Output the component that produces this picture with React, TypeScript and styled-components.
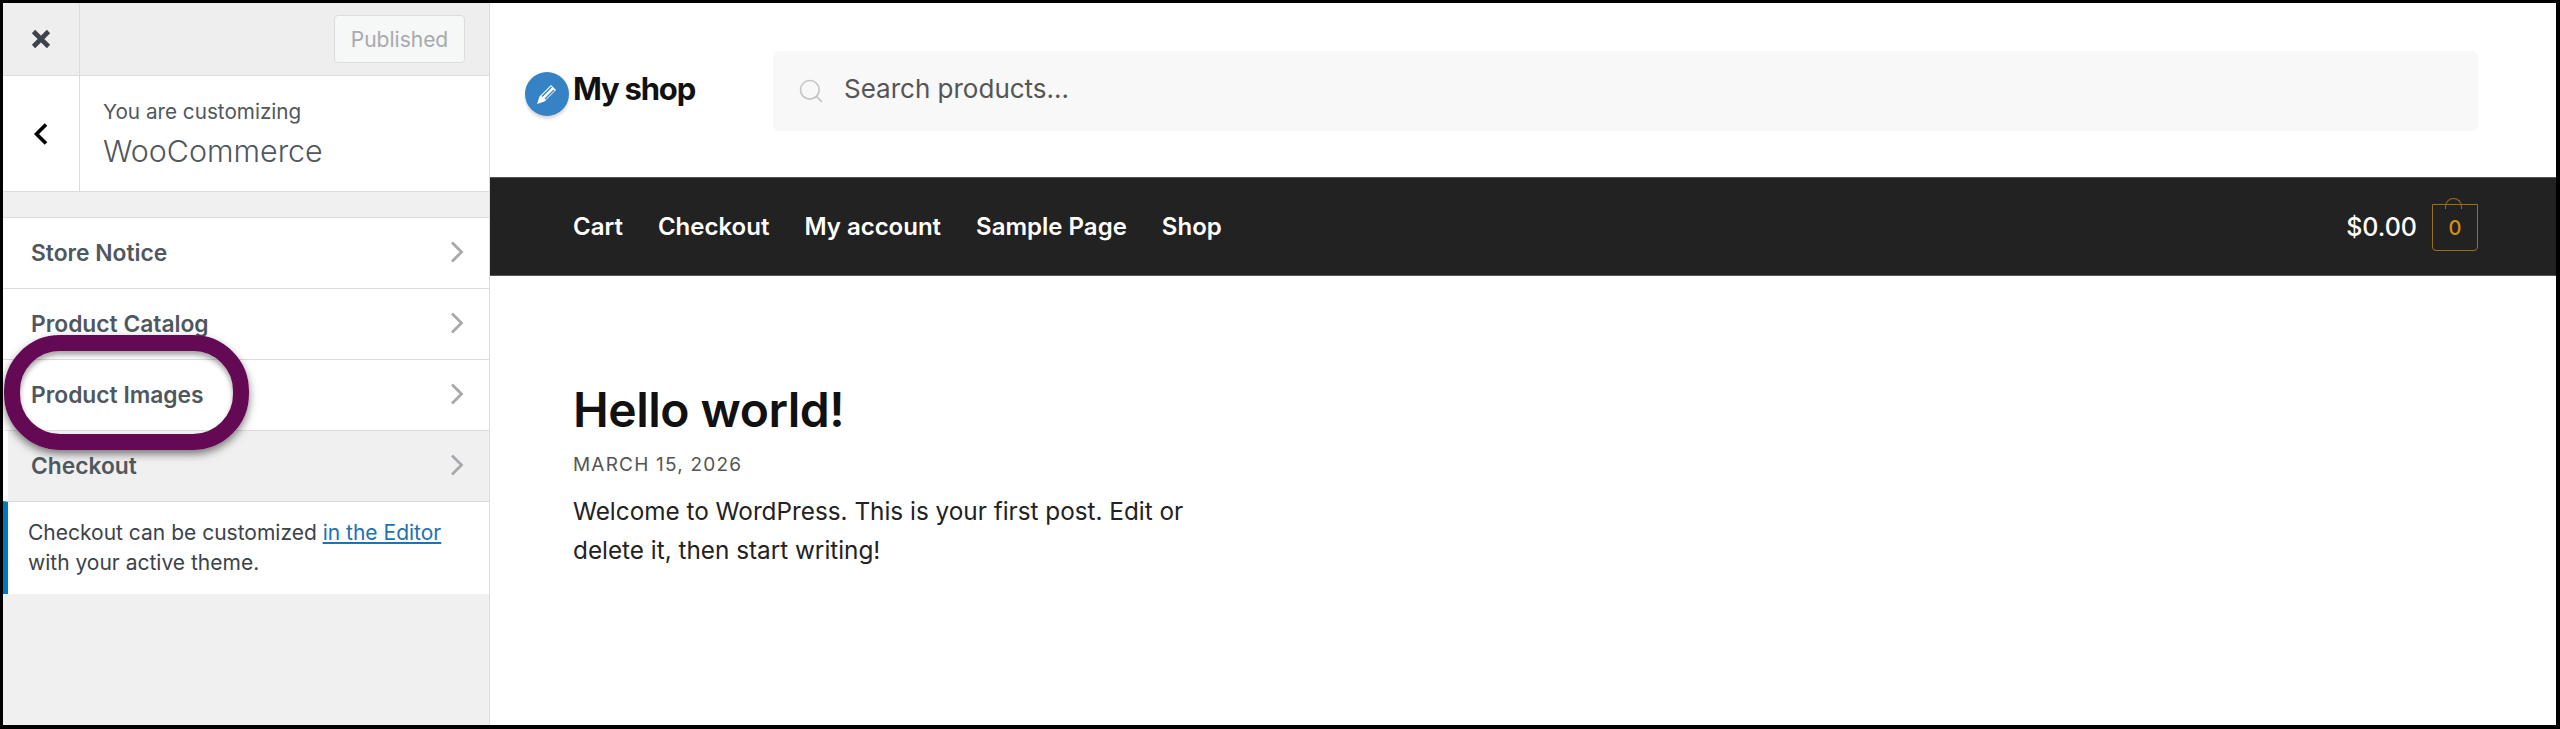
import React from 'react';
import styled, { createGlobalStyle } from 'styled-components';
import { Search } from 'lucide-react';

const GlobalStyle = createGlobalStyle`
    html, body {
        margin: 0;
        padding: 0;
        background: #000;
    }
`;

const menuItems = [
    { label: 'Store Notice' },
    { label: 'Product Catalog' },
    { label: 'Product Images' },
    { label: 'Checkout', active: true }
];

const navLinks = ['Cart', 'Checkout', 'My account', 'Sample Page', 'Shop'];

export default function App() {
    return (
        <Frame>
            <GlobalStyle />
            <Sidebar>
                <TopBar>
                    <CloseCell>
                        <svg width="20" height="20" viewBox="0 0 20 20">
                            <path d="M2.5 2.5L17.5 17.5M17.5 2.5L2.5 17.5" stroke="#3c434a" strokeWidth="4.6" />
                        </svg>
                    </CloseCell>
                    <PublishedButton>Published</PublishedButton>
                </TopBar>
                <SectionHeader>
                    <BackCell>
                        <svg width="16" height="24" viewBox="0 0 16 24">
                            <path d="M13 2.5L3.5 12L13 21.5" fill="none" stroke="#000" strokeWidth="3.6" />
                        </svg>
                    </BackCell>
                    <SectionTitle>
                        <Eyebrow>You are customizing</Eyebrow>
                        <PanelName>WooCommerce</PanelName>
                    </SectionTitle>
                </SectionHeader>
                <Spacer />
                {menuItems.map((item) => (
                    <MenuRow key={item.label} $active={item.active}>
                        {item.label}
                        <svg width="14" height="22" viewBox="0 0 14 22">
                            <path d="M2 1.5L11.5 11L2 20.5" fill="none" stroke="#a7aaad" strokeWidth="2.8" />
                        </svg>
                    </MenuRow>
                ))}
                <Notice>
                    Checkout can be customized <NoticeLink>in the Editor</NoticeLink> with your active theme.
                </Notice>
                <Ring />
            </Sidebar>
            <Main>
                <Masthead>
                    <Logo>
                        <LogoBadge>
                            <svg width="26" height="26" viewBox="0 0 26 26">
                                <path d="M3 23L5.5 15.5L17 4L22 9L10.5 20.5Z" fill="#fff" />
                                <path d="M8 15.5L17.5 6M11 18L20 9" stroke="#3582c4" strokeWidth="1.4" />
                            </svg>
                        </LogoBadge>
                        <LogoText>My shop</LogoText>
                    </Logo>
                    <SearchBox>
                        <Search size={28} color="#c4c4c4" strokeWidth={1.4} />
                        <SearchText>Search products...</SearchText>
                    </SearchBox>
                </Masthead>
                <NavBar>
                    <NavLinks>
                        {navLinks.map((link) => (
                            <NavLink key={link}>{link}</NavLink>
                        ))}
                    </NavLinks>
                    <Cart>
                        $0.00
                        <CartBag>
                            <CartHandle />0
                        </CartBag>
                    </Cart>
                </NavBar>
                <Post>
                    <PostTitle>Hello world!</PostTitle>
                    <PostDate>March 15, 2026</PostDate>
                    <PostBody>Welcome to WordPress. This is your first post. Edit or delete it, then start writing!</PostBody>
                </Post>
            </Main>
        </Frame>
    );
}

const Frame = styled.div`
    box-sizing: border-box;
    display: flex;
    width: 2560px;
    height: 729px;
    overflow: hidden;
    padding: 3px 4px 4px 3px;
    background: #000;
    font-family: Inter, 'Liberation Sans', sans-serif;
`;

const Sidebar = styled.aside`
    position: relative;
    box-sizing: border-box;
    display: flex;
    flex-direction: column;
    flex: 0 0 487px;
    background: #f0f0f1;
    border-right: 1px solid #dcdcde;
`;

const TopBar = styled.div`
    display: flex;
    align-items: center;
    justify-content: space-between;
    height: 72px;
    flex-shrink: 0;
    padding-right: 24px;
    background: #eeeeee;
    border-bottom: 1px solid #dcdcde;
`;

const CloseCell = styled.div`
    display: flex;
    align-items: center;
    justify-content: center;
    width: 76px;
    height: 100%;
    border-right: 1px solid #dcdcde;
`;

const PublishedButton = styled.div`
    box-sizing: border-box;
    display: flex;
    align-items: center;
    justify-content: center;
    width: 131px;
    height: 48px;
    border: 1px solid #dcdcde;
    border-radius: 4px;
    background: #f6f7f7;
    color: #a7aaad;
    font-size: 21px;
`;

const SectionHeader = styled.div`
    display: flex;
    height: 115px;
    flex-shrink: 0;
    background: #fff;
    border-bottom: 1px solid #dcdcde;
`;

const BackCell = styled.div`
    display: flex;
    align-items: center;
    justify-content: center;
    width: 76px;
    border-right: 1px solid #dcdcde;
`;

const SectionTitle = styled.div`
    display: flex;
    flex-direction: column;
    justify-content: center;
    padding-left: 23px;
    color: #50575e;
`;

const Eyebrow = styled.div`
    font-size: 20.7px;
    line-height: 30px;
`;

const PanelName = styled.div`
    margin-top: 4px;
    font-size: 30.4px;
    line-height: 40px;
    font-weight: 300;
`;

const Spacer = styled.div`
    height: 25px;
    flex-shrink: 0;
`;

const MenuRow = styled.div<{ $active?: boolean }>`
    box-sizing: border-box;
    display: flex;
    align-items: center;
    justify-content: space-between;
    height: 71px;
    flex-shrink: 0;
    padding: 0 25px 2px ${(p) => (p.$active ? '23px' : '28px')};
    background: ${(p) => (p.$active ? '#f0f0f1' : '#fff')};
    border-top: 1px solid #dcdcde;
    border-left: ${(p) => (p.$active ? '5px solid #fff' : 'none')};
    color: #50575e;
    font-size: 22.8px;
    font-weight: 600;
`;

const Notice = styled.div`
    padding: 16px 20px 16px 20px;
    background: #fff;
    border-left: 5px solid #0079bf;
    border-top: 1px solid #dcdcde;
    color: #3c434a;
    font-size: 21px;
    line-height: 30px;
`;

const NoticeLink = styled.span`
    color: #2271b1;
    text-decoration: underline;
`;

// purple annotation drawn over the sidebar
const Ring = styled.div`
    position: absolute;
    left: 1px;
    top: 332px;
    box-sizing: border-box;
    width: 245px;
    height: 115px;
    border: 16px solid #640a55;
    border-radius: 56px;
    box-shadow: 0 4px 8px rgba(0, 0, 0, 0.5), inset 0 4px 5px rgba(0, 0, 0, 0.35);
`;

const Main = styled.main`
    display: flex;
    flex-direction: column;
    flex: 1;
    background: #fff;
`;

const Masthead = styled.header`
    display: flex;
    align-items: center;
    height: 174px;
    flex-shrink: 0;
    padding: 1px 78px 0 35px;
    box-sizing: border-box;
`;

const Logo = styled.div`
    display: flex;
    align-items: center;
    width: 248px;
`;

const LogoText = styled.span`
    margin-top: -4px;
    color: #111;
    font-size: 31px;
    font-weight: 700;
    letter-spacing: -1.2px;
`;

const LogoBadge = styled.div`
    display: flex;
    align-items: center;
    justify-content: center;
    width: 44px;
    height: 44px;
    margin: 6px 4px 0 0;
    border-radius: 50%;
    background: #3582c4;
    box-shadow: 0 3px 3px rgba(0, 0, 0, 0.15);
`;

const SearchBox = styled.div`
    box-sizing: border-box;
    display: flex;
    align-items: center;
    gap: 19px;
    flex: 1;
    height: 80px;
    padding-left: 24px;
    background: #f8f8f8;
    border-radius: 6px;
`;

const SearchText = styled.span`
    margin-top: -4px;
    color: #555;
    font-size: 26px;
`;

const NavBar = styled.nav`
    display: flex;
    align-items: center;
    justify-content: space-between;
    height: 99px;
    flex-shrink: 0;
    padding: 0 78px 0 83px;
    background: #222;
    border-top: 1px solid #555;
    border-bottom: 1px solid #555;
    box-sizing: border-box;
`;

const NavLinks = styled.div`
    display: flex;
    gap: 35px;
`;

const NavLink = styled.span`
    color: #fff;
    font-size: 24px;
    font-weight: 600;
`;

const Cart = styled.div`
    display: flex;
    align-items: center;
    gap: 15px;
    color: #fff;
    font-size: 25px;
    font-weight: 500;
`;

const CartBag = styled.div`
    position: relative;
    box-sizing: border-box;
    display: flex;
    align-items: center;
    justify-content: center;
    width: 46px;
    height: 47px;
    margin-top: 2px;
    border: 1.5px solid #9c6f16;
    border-radius: 0 0 4px 4px;
    color: #d6920e;
    font-size: 20px;
    font-weight: 500;
`;

const CartHandle = styled.div`
    position: absolute;
    left: 12px;
    top: -7px;
    box-sizing: border-box;
    width: 17px;
    height: 11px;
    border: 1px solid #9c6f16;
    border-bottom: none;
    border-radius: 9px 9px 0 0;
`;

const Post = styled.article`
    padding: 105px 0 0 83px;
`;

const PostTitle = styled.h1`
    margin: 0;
    color: #111;
    font-size: 48px;
    line-height: 58px;
    font-weight: 600;
    letter-spacing: -0.5px;
`;

const PostDate = styled.div`
    margin-top: 14px;
    color: #555;
    font-size: 19px;
    line-height: 24px;
    letter-spacing: 1.2px;
    text-transform: uppercase;
`;

const PostBody = styled.p`
    width: 640px;
    margin: 15px 0 0;
    color: #222;
    font-size: 24.3px;
    line-height: 39px;
`;
